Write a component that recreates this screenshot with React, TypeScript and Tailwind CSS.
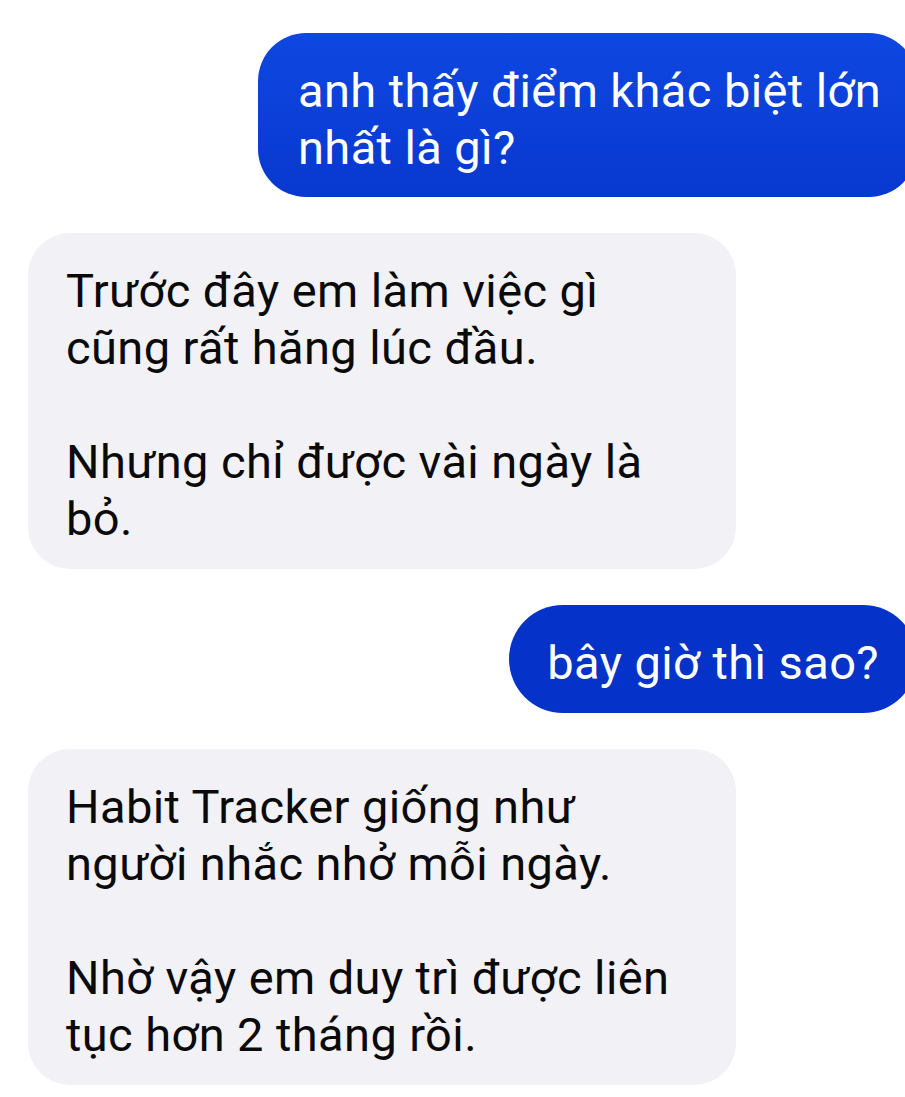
import React from "react";

const font = { fontFamily: "Roboto, 'Noto Sans', sans-serif" };

export default function App() {
  return (
    <div className="w-[905px] h-[1097px] bg-white overflow-hidden" style={font}>
      <div className="flex flex-col pt-[33px] gap-[36px] text-[47px] leading-[57px] tracking-[0.4px]">
        <div className="flex justify-end mr-[-12px]">
          <div className="rounded-[48px] bg-gradient-to-b from-[#0f47e2] to-[#0838cf] text-white pl-[40px] pr-[30px] pt-[29px] pb-[21px] w-[659px] whitespace-nowrap">
            anh thấy điểm khác biệt lớn
            <br />
            nhất là gì?
          </div>
        </div>
        <div className="flex justify-start pl-[28px]">
          <div className="rounded-[42px] bg-[#f1f1f6] text-[#0a0a0a] pl-[38px] pr-[30px] pt-[29px] pb-[22px] w-[708px] whitespace-nowrap">
            Trước đây em làm việc gì
            <br />
            cũng rất hăng lúc đầu.
            <br />
            <br />
            Nhưng chỉ được vài ngày là
            <br />
            bỏ.
          </div>
        </div>
        <div className="flex justify-end mr-[-12px]">
          <div className="rounded-[54px] bg-[#0533c9] text-white pl-[38px] pr-[38px] pt-[29px] pb-[22px] whitespace-nowrap">
            bây giờ thì sao?
          </div>
        </div>
        <div className="flex justify-start pl-[28px]">
          <div className="rounded-[42px] bg-[#f1f1f6] text-[#0a0a0a] pl-[38px] pr-[30px] pt-[29px] pb-[22px] w-[708px] whitespace-nowrap">
            Habit Tracker giống như
            <br />
            người nhắc nhở mỗi ngày.
            <br />
            <br />
            Nhờ vậy em duy trì được liên
            <br />
            tục hơn 2 tháng rồi.
          </div>
        </div>
      </div>
    </div>
  );
}
